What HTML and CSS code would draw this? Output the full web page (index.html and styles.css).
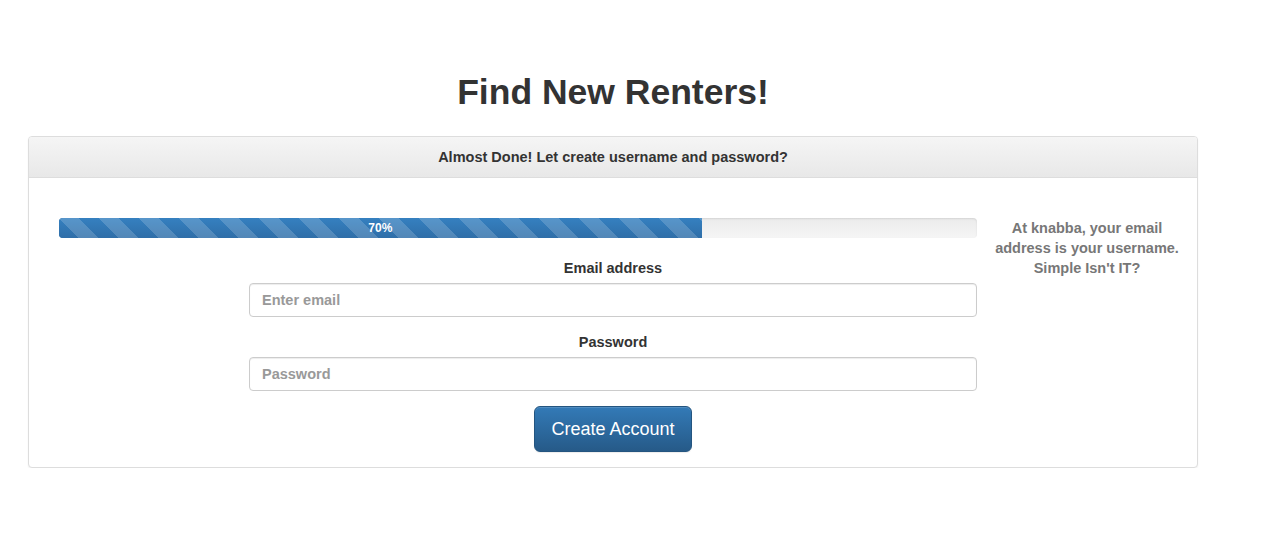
FILE: index.html
```html
<!DOCTYPE html>
<html lang="en">
<head>
<meta charset="utf-8">
<title>Find New Renters!</title>
<link rel="stylesheet" href="styles.css">
</head>
<body>
<div class="page">
  <h1 class="title">Find New Renters!</h1>
  <div class="panel">
    <div class="panel-heading">Almost Done! Let create username and password?</div>
    <div class="panel-body">
      <div class="main">
        <div class="progress"><div class="progress-bar" style="width:70%">70%</div></div>
        <form class="form">
          <div class="group">
            <label class="label" for="email">Email address</label>
            <input class="input" id="email" type="email" placeholder="Enter email">
          </div>
          <div class="group">
            <label class="label" for="pw">Password</label>
            <input class="input" id="pw" type="password" placeholder="Password">
          </div>
          <div class="actions">
            <button class="btn" type="button">Create Account</button>
          </div>
        </form>
      </div>
      <div class="aside">At knabba, your email address is your username. Simple Isn't IT?</div>
    </div>
  </div>
</div>
</body>
</html>
```
FILE: styles.css
```css
* { box-sizing: border-box; }
html, body { margin: 0; padding: 0; background: #fff; }
body {
  font-family: "Liberation Sans", Arial, Helvetica, sans-serif;
  font-size: 14.5px;
  line-height: 20px;
  font-weight: bold;
  color: #333;
}
.page {
  padding: 70px 0 0 28px;
}
.title {
  width: 1170px;
  margin: 0 0 26px 0;
  text-align: center;
  font-size: 35.5px;
  line-height: 40px;
  font-weight: bold;
  color: #333;
  position: relative;
  top: 2px;
}
.panel {
  width: 1170px;
  border: 1px solid #ddd;
  border-radius: 4px;
  background: #fff;
  box-shadow: 0 1px 2px rgba(0,0,0,.06);
}
.panel-heading {
  padding: 10px 15px;
  text-align: center;
  color: #333;
  background: linear-gradient(to bottom, #f5f5f5 0, #e8e8e8 100%);
  border-bottom: 1px solid #ddd;
  border-radius: 3px 3px 0 0;
}
.panel-body {
  display: flex;
  padding: 40px 0 15px 30px;
}
.main {
  width: 918px;
  flex: none;
}
.aside {
  flex: 1;
  text-align: center;
  color: #777;
  padding: 0 8px;
}
.progress {
  height: 20px;
  margin-bottom: 20px;
  border-radius: 4px;
  overflow: hidden;
  background: linear-gradient(to bottom, #ebebeb 0, #f5f5f5 100%);
  box-shadow: inset 0 1px 2px rgba(0,0,0,.1);
}
.progress-bar {
  height: 100%;
  font-size: 12px;
  line-height: 20px;
  color: #fff;
  text-align: center;
  background-color: #337ab7;
  background-image:
    linear-gradient(45deg, rgba(255,255,255,.17) 25%, transparent 25%, transparent 50%, rgba(255,255,255,.17) 50%, rgba(255,255,255,.17) 75%, transparent 75%, transparent),
    linear-gradient(to bottom, #3580c0 0, #2f6ea8 100%);
  background-size: 40px 40px, 100% 100%;
}
.form {
  width: 728px;
  margin-left: 190px;
}
.group {
  margin-bottom: 15px;
  text-align: center;
}
.label {
  display: inline-block;
  margin-bottom: 5px;
  color: #333;
}
.input {
  display: block;
  width: 100%;
  height: 34px;
  padding: 6px 12px;
  font-family: inherit;
  font-size: 14.5px;
  font-weight: bold;
  line-height: 20px;
  color: #555;
  background: #fff;
  border: 1px solid #ccc;
  border-radius: 4px;
  box-shadow: inset 0 1px 1px rgba(0,0,0,.075);
  outline: none;
}
.input::placeholder { color: #999; opacity: 1; }
.actions {
  text-align: center;
}
.btn {
  display: inline-block;
  padding: 10px 16px;
  font-family: inherit;
  font-size: 18px;
  font-weight: normal;
  line-height: 24px;
  color: #fff;
  background: linear-gradient(to bottom, #337ab7 0, #265a88 100%);
  border: 1px solid #245580;
  border-radius: 6px;
  box-shadow: inset 0 1px 0 rgba(255,255,255,.15), 0 1px 1px rgba(0,0,0,.075);
  cursor: pointer;
}
```
